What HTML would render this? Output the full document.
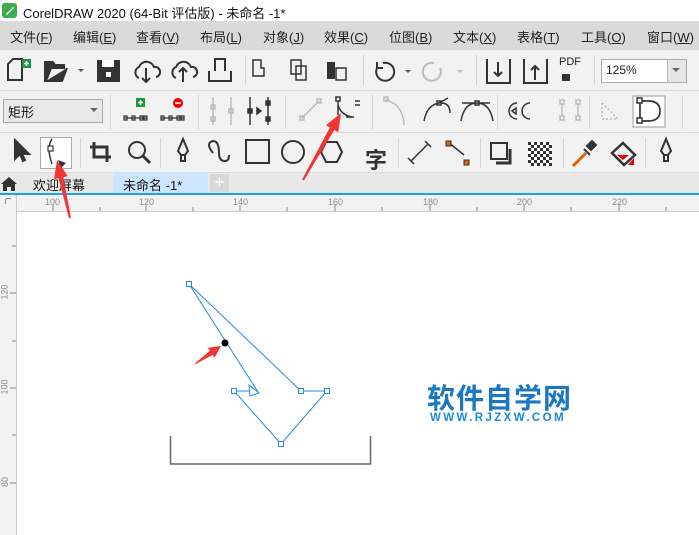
<!DOCTYPE html>
<html><head><meta charset="utf-8"><style>
*{margin:0;padding:0;box-sizing:border-box}
body{width:699px;height:535px;overflow:hidden;background:#fff;font-family:"Liberation Sans","Noto Sans CJK SC",sans-serif;position:relative}
.a{position:absolute}
.t{font-size:13px;color:#111;white-space:nowrap}
.m{font-size:13px;color:#222;top:27px;position:absolute;white-space:nowrap}
.sep{position:absolute;width:1px;background:#d6d6d6}
.rl{position:absolute;font-size:9px;color:#888}
</style></head><body>
<div class="a" style="left:0;top:0;width:699px;height:21px;background:#fff"></div>
<svg class="a" style="left:2px;top:3px" width="15" height="15"><rect width="15" height="15" rx="3" fill="#3bae49"/><path d="M4 11 L11 4 L12 5 L5 12Z" fill="#fff"/></svg>
<div class="a t" style="left:23px;top:3px;font-size:13px">CorelDRAW 2020 (64-Bit 评估版) - 未命名 -1*</div>
<div class="a" style="left:0;top:21px;width:699px;height:29px;background:#dadada"></div>
<span class="m" style="left:10px">文件(<u>F</u>)</span>
<span class="m" style="left:73px">编辑(<u>E</u>)</span>
<span class="m" style="left:136px">查看(<u>V</u>)</span>
<span class="m" style="left:200px">布局(<u>L</u>)</span>
<span class="m" style="left:263px">对象(<u>J</u>)</span>
<span class="m" style="left:324px">效果(<u>C</u>)</span>
<span class="m" style="left:389px">位图(<u>B</u>)</span>
<span class="m" style="left:453px">文本(<u>X</u>)</span>
<span class="m" style="left:517px">表格(<u>T</u>)</span>
<span class="m" style="left:581px">工具(<u>O</u>)</span>
<span class="m" style="left:647px">窗口(<u>W</u>)</span>
<div class="a" style="left:0;top:50px;width:699px;height:123px;background:#f2f2f2"></div>
<div class="a" style="left:0;top:90px;width:699px;height:1px;background:#dcdcdc"></div>
<div class="a" style="left:0;top:132px;width:699px;height:1px;background:#dcdcdc"></div>
<div class="a" style="left:0;top:172px;width:699px;height:1px;background:#dcdcdc"></div>
<svg class="a" style="left:0;top:50px" width="699" height="40" fill="none" stroke="#333" stroke-width="2">
<path d="M8 30V14l5-5h9v21z"/><rect x="22" y="9" width="9" height="9" fill="#1a9a3a" stroke="none"/><path d="M26.5 11v5M24 13.5h5" stroke="#fff" stroke-width="1.5"/>
<path d="M45 31V12h8l2 3h9v3H51l-5 13z M46 31h16l5-13" fill="#333"/>
<path d="M78 19l3 3 3-3" fill="#555" stroke="none"/>
<rect x="97" y="10" width="23" height="22" fill="#333" stroke="none"/><rect x="102" y="10" width="12" height="7" fill="#fff" stroke="none"/><rect x="106" y="22" width="5" height="5" fill="#fff" stroke="none"/>
<path d="M139 28a6 6 0 0 1 0-11a8 8 0 0 1 15 0a5 5 0 0 1 2 10M146 18v14m-4-4l4 4 4-4"/>
<path d="M176 28a6 6 0 0 1 0-11a8 8 0 0 1 15 0a5 5 0 0 1 2 10M183 32v-14m-4 4l4-4 4 4"/>
<path d="M209 21v10h22v-10M215 21v-12h10v12"/>
<path d="M253 10h8v8h3v8h-11z" stroke-width="1.5"/>
<path d="M291 10h10v14h-10zM296 16h10v14h-10z" stroke-width="1.5"/>
<rect x="327" y="12" width="8" height="17" fill="#333" stroke="none"/><path d="M336 18h10v12h-10z" stroke-width="1.5"/>
<path d="M377 18a9 9 0 1 0 6-5M377 12v6h6"/><path d="M405 20l3 3 3-3" fill="#555" stroke="none"/>
<path d="M440 18a9 9 0 1 1-6-5" stroke="#bbb"/><path d="M457 20l3 3 3-3" fill="#bbb" stroke="none"/>
<path d="M487 9v24h23V9M498 12v14m-4-4l4 4 4-4"/>
<path d="M524 9v24h23V9M535 30v-14m-4 4l4-4 4 4"/>
<rect x="562" y="24" width="8" height="7" fill="#333" stroke="none"/>
</svg>
<div class="a" style="left:559px;top:56px;font-size:11px;color:#222">PDF</div>
<div class="sep" style="left:245px;top:55px;height:30px"></div>
<div class="sep" style="left:363px;top:55px;height:30px"></div>
<div class="sep" style="left:476px;top:55px;height:30px"></div>
<div class="sep" style="left:594px;top:55px;height:30px"></div>
<div class="a" style="left:601px;top:59px;width:86px;height:24px;background:#fff;border:1px solid #aaa;font-size:12px;padding:3px 4px;color:#222">125%</div>
<div class="a" style="left:667px;top:60px;width:19px;height:22px;background:#e6e6e6;border-left:1px solid #bbb"></div>
<svg class="a" style="left:672px;top:68px" width="10" height="6"><path d="M0 0h8l-4 4z" fill="#666"/></svg>
<div class="a" style="left:3px;top:99px;width:100px;height:24px;background:#e9e9e9;border:1px solid #aaa;font-size:13px;padding:2px 4px;color:#111">矩形</div>
<svg class="a" style="left:90px;top:108px" width="10" height="6"><path d="M0 0h8l-4 4z" fill="#666"/></svg>
<svg class="a" style="left:0;top:91px" width="699" height="41" fill="none" stroke="#333" stroke-width="1.5">
<rect x="136" y="7" width="9" height="9" fill="#1a9a3a" stroke="none"/><path d="M140.5 9v5M138 11.5h5" stroke="#fff"/>
<path d="M124 27h23M124 25h3v4h-3zM132 25h3v4h-3zM140 25h3v4h-3zM144 25h3v4h-3z" stroke-width="1.2"/>
<circle cx="178" cy="12" r="5" fill="#e00" stroke="none"/><path d="M175 12h6" stroke="#fff"/>
<path d="M161 27h23M161 25h3v4h-3zM169 25h3v4h-3zM177 25h3v4h-3zM181 25h3v4h-3z" stroke-width="1.2"/>
<g stroke="#bbb"><path d="M213 6v28M231 6v28M211 14h4v4h-4zM211 26h4v4h-4zM229 18h4v4h-4z"/></g>
<path d="M250 6v28M268 6v28M248 18h4v4h-4zM266 10h4v4h-4zM266 26h4v4h-4zM257 17l4 3-4 3z" fill="#333"/>
<g stroke="#bbb"><path d="M302 27l17-17M300 25h4v4h-4zM317 8h4v4h-4z"/></g>
<path d="M338 10v14M336 6h4v4h-4zM338 14q3 10 14 12M346 26h8" />
<path d="M355 10h5M355 14h5"/>
<g stroke="#bbb"><path d="M386 8l10 6q8 8 8 20M384 6h4v4h-4z"/></g>
<path d="M424 30q3-16 15-18l9-5M437 10h4v4h-4zM450 22q0-10-9-10"/>
<path d="M461 30q3-18 16-18q13 0 16 18M475 10h4v4h-4zM462 12h28"/>
<path d="M517 12a8 8 0 0 0 0 16M530 12a8 8 0 0 0 0 16M512 20l4-3v6z"/>
<g stroke="#bbb"><path d="M560 9h4v4h-4zM560 25h4v4h-4zM576 9h4v4h-4zM576 25h4v4h-4zM562 13v12M578 13v12"/></g>
<g stroke="#bbb" stroke-dasharray="2 2"><path d="M602 12l16 16M602 12v16h16"/></g>
<rect x="633" y="5" width="32" height="31" fill="#fff" stroke="#999" stroke-width="1"/>
<path d="M640 10v20M640 10h8q12 0 12 10t-12 10h-8" stroke-width="1.7"/><rect x="637" y="7" width="5" height="5" fill="#fff"/><rect x="637" y="27" width="5" height="5" fill="#fff"/>
</svg>
<div class="sep" style="left:110px;top:95px;height:34px"></div>
<div class="sep" style="left:198px;top:95px;height:34px"></div>
<div class="sep" style="left:285px;top:95px;height:34px"></div>
<div class="sep" style="left:372px;top:95px;height:34px"></div>
<div class="sep" style="left:497px;top:95px;height:34px"></div>
<div class="sep" style="left:589px;top:95px;height:34px"></div>
<div class="sep" style="left:682px;top:95px;height:34px"></div>
<div class="a" style="left:40px;top:137px;width:32px;height:32px;background:#fff;border:1px solid #aaa"></div>
<svg class="a" style="left:0;top:133px" width="699" height="40" fill="none" stroke="#333" stroke-width="2">
<path d="M15 7v19l5-5 3 7 2-1-3-6h7z" fill="#333"/>
<path d="M52 6q-6 8 0 25" stroke-width="1.5"/><rect x="48" y="13" width="5" height="5" fill="#fff" stroke-width="1.2"/><path d="M58 27l8 3-5 5z" fill="#333" stroke="none"/>
<path d="M94 9v15h17M90 14h17v15" stroke-width="3"/>
<circle cx="137" cy="17" r="8"/><path d="M143 23l7 7" stroke-width="3"/>
<path d="M183 6l-5 12 3 4h4l3-4zM181 22v6h4v-6"/>
<path d="M213 20q-8-10 0-12q6 0 6 12q0 8 6 8q4 0 4-6"/>
<rect x="246" y="7" width="23" height="23"/>
<circle cx="293" cy="19" r="11"/>
<path d="M326 9h11l5 10-5 10h-11l-5-10z"/>
<path d="M411 28l17-17M408 25l6 6M425 8l6 6" stroke-width="1.5"/>
<path d="M448 9l16 13" stroke-width="1.5"/><rect x="446" y="8" width="5" height="5" fill="#e66000" stroke-width="1"/><rect x="464" y="27" width="5" height="5" fill="#e66000" stroke-width="1"/>
<path d="M491 10h16v16h-16z"/><path d="M496 30h14v-14" stroke-width="3"/>
</svg>
<svg class="a" style="left:528px;top:142px" width="24" height="24"><defs><pattern id="ck" width="6" height="6" patternUnits="userSpaceOnUse"><rect width="3" height="3" fill="#333"/><rect x="3" y="3" width="3" height="3" fill="#333"/><rect x="3" width="3" height="3" fill="#fff"/><rect y="3" width="3" height="3" fill="#fff"/></pattern></defs><rect width="24" height="24" fill="url(#ck)"/></svg>
<svg class="a" style="left:560px;top:133px" width="139" height="40" fill="none" stroke="#333" stroke-width="2">
<path d="M13 33l13-13" stroke="#e66000" stroke-width="3"/><path d="M24 16l6 6M27 13l5-5 4 4-5 5z" fill="#333"/>
<path d="M52 20l11-10 12 12-11 10z" stroke-width="2.5"/><path d="M57 22h12l-6 5z" fill="#e00" stroke="none"/><path d="M74 25v7h-6z" fill="#e00" stroke="none"/>
<path d="M106 6l-5 12 3 4h4l3-4zM104 22v6h4v-6"/>
</svg>
<div class="a" style="left:365px;top:143px;font-size:22px;font-weight:bold;color:#333">字</div>
<div class="sep" style="left:80px;top:138px;height:30px"></div>
<div class="sep" style="left:160px;top:138px;height:30px"></div>
<div class="sep" style="left:398px;top:138px;height:30px"></div>
<div class="sep" style="left:480px;top:138px;height:30px"></div>
<div class="sep" style="left:563px;top:138px;height:30px"></div>
<div class="sep" style="left:645px;top:138px;height:30px"></div>
<div class="a" style="left:0;top:173px;width:699px;height:20px;background:#e8e8e8"></div>
<svg class="a" style="left:1px;top:176px" width="16" height="15"><path d="M0 8L8 1l8 7h-2v7h-4v-4H6v4H2V8z" fill="#333"/></svg>
<div class="a t" style="left:33px;top:175px">欢迎屏幕</div>
<div class="a" style="left:113px;top:173px;width:95px;height:20px;background:#cce4fc"></div>
<div class="a t" style="left:123px;top:175px">未命名 -1*</div>
<div class="a" style="left:210px;top:174px;width:19px;height:18px;background:#d8d8d8;color:#fff;font-size:18px;line-height:17px;text-align:center">+</div>
<div class="a" style="left:0;top:193px;width:699px;height:2px;background:#1aa0f0"></div>
<div class="a" style="left:0;top:195px;width:699px;height:17px;background:#f2f2f2;border-bottom:1px solid #ccc"></div>
<div class="a" style="left:0;top:195px;width:17px;height:340px;background:#f2f2f2;border-right:1px solid #ccc"></div>
<svg class="a" style="left:0;top:195px" width="699" height="340">
<g stroke="#888" stroke-width="1">
<path d="M53 10v6M146 10v6M240 10v6M335 10v6M430 10v6M524 10v6M619 10v6M100 12v4M193 12v4M287 12v4M382 12v4M477 12v4M571 12v4M666 12v4"/>
<path d="M10 98h6M10 193h6M10 288h6M12 51h4M12 146h4M12 240h4"/>
</g>
<g fill="#888"><path d="M5 3h6v1H5zM5 3v6h1V3z"/></g>
</svg>
<div class="rl" style="left:45px;top:197px">100</div>
<div class="rl" style="left:139px;top:197px">120</div>
<div class="rl" style="left:233px;top:197px">140</div>
<div class="rl" style="left:328px;top:197px">160</div>
<div class="rl" style="left:423px;top:197px">180</div>
<div class="rl" style="left:517px;top:197px">200</div>
<div class="rl" style="left:612px;top:197px">220</div>
<div class="rl" style="left:-3px;top:287px;transform:rotate(-90deg)">120</div>
<div class="rl" style="left:-3px;top:382px;transform:rotate(-90deg)">100</div>
<div class="rl" style="left:0px;top:477px;transform:rotate(-90deg)">80</div>
<svg class="a" style="left:0;top:0" width="699" height="535" fill="none">
<g stroke="#1e8be6" stroke-width="1">
<path d="M189 284L258 392M189 284L301 391H327L281 444L234 391H254"/>
<path d="M249 385l10 8-9 3z" fill="#fff"/>
</g>
<g stroke="#1e8be6" fill="#fff" stroke-width="1">
<rect x="186.5" y="281.5" width="5" height="5"/><rect x="231.5" y="388.5" width="5" height="5"/><rect x="298.5" y="388.5" width="5" height="5"/><rect x="324.5" y="388.5" width="5" height="5"/><rect x="278.5" y="441.5" width="5" height="5"/>
</g>
<circle cx="225" cy="343" r="3.5" fill="#000"/>
<path d="M170.5 436v28h200v-28" stroke="#666" stroke-width="1.5"/>
<g fill="#f03535">
<polygon points="195.3,364.4 212.6,354.9 214.6,357.7 221,346 207.8,347.9 209.8,350.7 194.7,363.6"/>
<polygon points="71,217.8 63.3,177.1 67.7,176.1 57,160 54.1,179.1 58.5,178.1 69,218.2"/>
<polygon points="303.9,180.5 334.3,129.9 338.2,132.2 341,113 326,125.2 329.9,127.5 302.1,179.5"/>
</g>
</svg>
<div class="a" style="left:427px;top:381px;font-size:28px;font-weight:bold;color:#1a78c2;letter-spacing:1px;font-family:'Noto Sans CJK SC',sans-serif;line-height:32px">软件自学网</div>
<div class="a" style="left:430px;top:412px;font-size:11.5px;font-weight:bold;color:#1a8ad8;letter-spacing:2.4px">WWW.RJZXW.COM</div>
</body></html>
